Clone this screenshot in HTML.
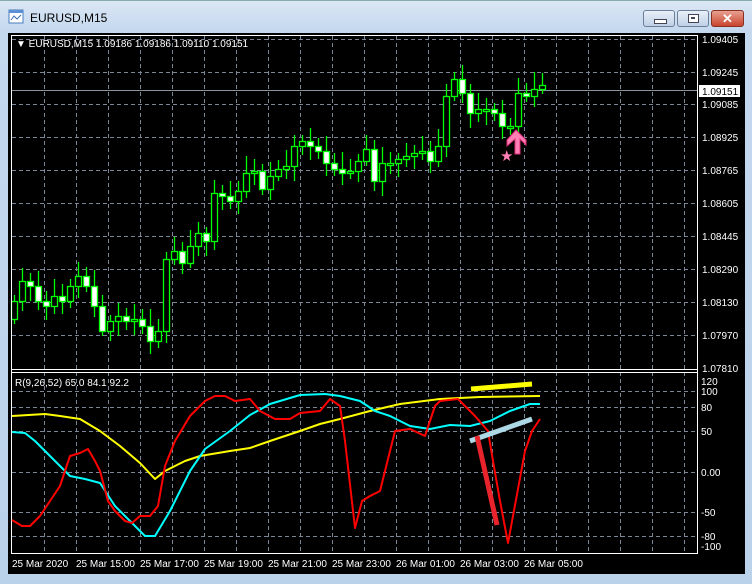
<!DOCTYPE html>
<html><head><meta charset="utf-8">
<style>
html,body{margin:0;padding:0;width:752px;height:584px;overflow:hidden;background:#bcd4ec;font-family:"Liberation Sans",sans-serif}
#win{position:absolute;left:0;top:0;width:752px;height:584px;background:linear-gradient(#dbe7f4,#c4d8ee 30px,#bad2ea);border-top:1px solid #8aa;box-sizing:border-box}
.title{position:absolute;left:30px;top:10px;font-size:12px;color:#000}
.btn{position:absolute;top:9px;height:17px;border:1px solid #6d7f99;border-radius:3px;background:linear-gradient(#e9f0f8,#bfd0e6);box-sizing:border-box}
#chart{position:absolute;left:8px;top:32px}
</style></head><body>
<div id="win">
<svg style="position:absolute;left:8px;top:8px" width="16" height="16"><rect x="1" y="1" width="14" height="13" fill="#fff" stroke="#4a7cc0"/><rect x="1" y="1" width="14" height="3" fill="#5b8fd6"/><path d="M3 11 L6 7 L9 10 L13 6" stroke="#3a6fb5" fill="none"/></svg>
<div class="title">EURUSD,M15</div>
<div class="btn" style="left:643px;width:32px"><div style="position:absolute;left:10px;top:8px;width:11px;height:3px;background:#fff;border:1px solid #445"></div></div>
<div class="btn" style="left:677px;width:32px"><div style="position:absolute;left:10px;top:3px;width:9px;height:7px;background:#fff;border:1px solid #445"></div><div style="position:absolute;left:13px;top:6px;width:4px;height:2px;background:#445"></div></div>
<div class="btn" style="left:711px;width:33px;background:linear-gradient(#e8a090,#c8452e);border-color:#8a3020;color:#fff;font-weight:bold;font-size:13px;text-align:center;line-height:15px">✕</div>
<svg id="chart" width="737" height="541" viewBox="8 32 737 541" xmlns="http://www.w3.org/2000/svg" font-family="Liberation Sans, sans-serif">
<rect x="8" y="32" width="737" height="541" fill="#000"/>
<g id="grid" stroke="#7b8796" stroke-dasharray="4,3" stroke-width="1"></g>
<line x1="11" y1="89.5" x2="698" y2="89.5" stroke="#8a949e"/>
<g id="candles"></g>
<line x1="11.5" y1="34.5" x2="11.5" y2="553" stroke="#fff"/>
<line x1="697.5" y1="34.5" x2="697.5" y2="553" stroke="#fff"/>
<line x1="11" y1="34.5" x2="698" y2="34.5" stroke="#fff"/>
<line x1="11" y1="368.5" x2="698" y2="368.5" stroke="#fff"/>
<line x1="11" y1="371.5" x2="698" y2="371.5" stroke="#fff"/>
<line x1="11" y1="552.5" x2="698" y2="552.5" stroke="#fff"/>
<g fill="#fff" font-size="10">
<text x="16" y="46" font-size="10">▼ EURUSD,M15  1.09186 1.09186 1.09110 1.09151</text>
<text x="702" y="42">1.09405</text><text x="702" y="75">1.09245</text>
<rect x="699" y="84" width="41" height="12" fill="#fff"/><text x="702" y="94" fill="#000">1.09151</text>
<text x="702" y="107">1.09085</text><text x="702" y="140">1.08925</text><text x="702" y="173">1.08765</text><text x="702" y="206">1.08605</text><text x="702" y="239">1.08445</text><text x="702" y="272">1.08290</text><text x="702" y="305">1.08130</text><text x="702" y="338">1.07970</text><text x="702" y="371">1.07810</text>
<text x="15" y="385">R(9,26,52) 65.0 84.1 92.2</text>
<text x="701" y="384">120</text><text x="701" y="394">100</text><text x="701" y="410">80</text><text x="701" y="434">50</text><text x="701" y="475">0.00</text><text x="701" y="515">-50</text><text x="701" y="539">-80</text><text x="701" y="549">-100</text>
<text x="12" y="566">25 Mar 2020</text><text x="76" y="566">25 Mar 15:00</text><text x="140" y="566">25 Mar 17:00</text><text x="204" y="566">25 Mar 19:00</text><text x="268" y="566">25 Mar 21:00</text><text x="332" y="566">25 Mar 23:00</text><text x="396" y="566">26 Mar 01:00</text><text x="460" y="566">26 Mar 03:00</text><text x="524" y="566">26 Mar 05:00</text>
</g>
<g fill="none" stroke-linejoin="round">
<polyline stroke="#ffff00" stroke-width="2" points="12,415 45,413 60,415 80,418 100,430 120,445 140,462 155,478 165,470 185,460 200,455 230,450 250,447 270,440 300,430 320,423 340,418 370,410 400,403 440,398 480,396 540,395"/>
<polyline stroke="#00ffff" stroke-width="2" points="12,431 25,432 35,440 55,460 70,475 85,478 100,482 115,505 130,520 145,535 155,535 170,510 190,470 205,448 230,430 250,414 270,403 300,394 325,393 340,395 360,400 375,410 390,415 410,425 430,428 450,424 470,425 490,420 510,410 530,403 540,403"/>
<polyline stroke="#ff0000" stroke-width="2" points="12,519 22,525 30,525 40,515 50,500 60,485 70,455 80,452 88,448 95,460 100,470 108,500 115,510 125,520 132,522 140,515 150,515 158,505 165,465 175,440 190,415 205,400 215,395 225,395 235,400 250,398 260,410 275,418 290,418 300,412 320,410 330,398 340,405 345,440 355,527 362,500 370,495 380,490 395,430 410,428 425,435 435,405 440,400 458,398 475,415 488,430 493,460 500,500 508,542 525,450 532,430 540,418"/>
<line x1="471" y1="388" x2="532" y2="383" stroke="#ffff00" stroke-width="5"/>
<line x1="470" y1="440" x2="532" y2="418" stroke="#add8e6" stroke-width="5"/>
<line x1="477" y1="435" x2="497" y2="524" stroke="#e8232b" stroke-width="5"/>
</g>
<path d="M516 129 L526 139 L526 144 L520 138 L520 153 L515 153 L515 138 L507 145 L507 139 Z" fill="#ff7eb4" stroke="#e0307a" stroke-width="1"/>
<text x="500" y="160" fill="#ff7eb4" font-size="15">★</text>
</svg>
</div>
<script>
(function(){
var NS='http://www.w3.org/2000/svg';
function el(p,t,a){var e=document.createElementNS(NS,t);for(var k in a)e.setAttribute(k,a[k]);p.appendChild(e);return e;}
var g=document.getElementById('grid');
for(var x=44;x<698;x+=32){el(g,'line',{x1:x+.5,y1:35,x2:x+.5,y2:552});}
[38,71,103,136,169,202,235,268,301,334,390,406,430,471,511,535].forEach(function(y){el(g,'line',{x1:12,y1:y+.5,x2:697,y2:y+.5});});
var c=[300,280,285,300,305,295,300,285,275,285,305,330,320,315,320,318,325,340,330,258,250,262,245,232,240,192,195,200,190,172,170,188,175,168,165,145,140,145,150,162,168,172,170,160,148,180,162,162,158,155,152,150,160,145,95,78,92,112,108,108,112,125,125,92,95,88,84];
var cg=document.getElementById('candles'),prev=318;
for(var i=0;i<c.length;i++){var cx=14+8*i,o=prev,cl=c[i];var t0=Math.min(o,cl),b0=Math.max(o,cl);if(b0-t0<2){b0=t0+2;}
var wt=t0-6-(i*7%12),wb=b0+5+(i*5%11);
el(cg,'line',{x1:cx+.5,y1:wt,x2:cx+.5,y2:wb,stroke:'#00ff00','stroke-width':1.3});
el(cg,'rect',{x:cx-2.5,y:t0+.5,width:6,height:b0-t0,fill:(cl>o?'#fff':'#000'),stroke:'#00ff00','stroke-width':1.3});
prev=cl;}
})();
</script>
</body></html>
